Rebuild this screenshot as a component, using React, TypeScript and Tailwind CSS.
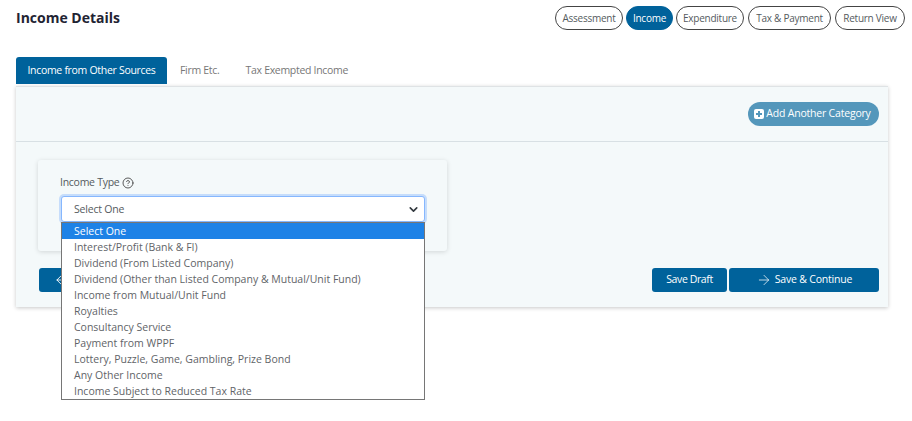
import React from 'react';
import { ArrowRight, ArrowLeft, ChevronDown, CircleHelp } from 'lucide-react';

const steps = [
  { label: 'Assessment', box: 'w-[68px]' },
  { label: 'Income', box: 'w-[47px] ml-[3px]' },
  { label: 'Expenditure', box: 'w-[68px] ml-[3px]' },
  { label: 'Tax & Payment', box: 'w-[83px] ml-[4px]' },
  { label: 'Return View', box: 'w-[70px] ml-[4px]' },
];

const incomeTypes = [
  'Select One',
  'Interest/Profit (Bank & FI)',
  'Dividend (From Listed Company)',
  'Dividend (Other than Listed Company & Mutual/Unit Fund)',
  'Income from Mutual/Unit Fund',
  'Royalties',
  'Consultancy Service',
  'Payment from WPPF',
  'Lottery, Puzzle, Game, Gambling, Prize Bond',
  'Any Other Income',
  'Income Subject to Reduced Tax Rate',
];

export default function App() {
  return (
    <div className="w-[912px] h-[421px] bg-white overflow-hidden font-['Open_Sans',sans-serif] text-[#555b60]">
      <div className="flex items-start justify-between pl-4 pr-[7px] pt-[6px] h-[57px]">
        <h1 className="text-[14px] font-bold leading-6 text-[#1f2433]">Income Details</h1>
        <div className="flex">
          {steps.map((step) => (
            <div
              key={step.label}
              className={
                step.label === 'Income'
                  ? `${step.box} h-6 flex items-center justify-center rounded-full text-[10px] tracking-[-0.25px] bg-[#00629b] border border-[#00629b] text-white`
                  : `${step.box} h-6 flex items-center justify-center rounded-full text-[10px] tracking-[-0.25px] border border-[#444] text-[#555b60]`
              }
            >
              {step.label}
            </div>
          ))}
        </div>
      </div>

      <div className="flex items-center pl-4 h-[27px] text-[10.5px] tracking-[-0.3px]">
        <div className="h-[27px] w-[151px] flex items-center justify-center rounded-t-[3px] bg-[#00629b] text-white">
          Income from Other Sources
        </div>
        <div className="ml-[13px] text-[#777] mt-[1px]">Firm Etc.</div>
        <div className="ml-[26px] text-[#777] mt-[1px]">Tax Exempted Income</div>
      </div>

      <div className="mx-4 mt-[2px] w-[872px] h-[221px] bg-[#f4f9fa] border-t border-[#dfe3e5] shadow-[0_1px_4px_rgba(0,0,0,0.22)]">
        <div className="h-[55px] flex items-center justify-end pr-[9px] border-b border-[#d8e0e4]">
          <div className="h-6 w-[131px] pr-[2px] flex items-center justify-center gap-[2px] rounded-full bg-[#5497bb] text-white text-[10.5px] tracking-[-0.2px]">
            <span className="w-[10px] h-[10px] rounded-[2px] bg-white flex items-center justify-center">
              <svg viewBox="0 0 10 10" className="w-[10px] h-[10px]">
                <path d="M5 2v6M2 5h6" stroke="#5497bb" strokeWidth="2" />
              </svg>
            </span>
            <span className="-mt-[1px]">Add Another Category</span>
          </div>
        </div>

        <div className="px-[22px] pt-[18px]">
          <div className="relative w-[409px] h-[91px] rounded-[3px] bg-[#f4f9fa] shadow-[0_1px_5px_rgba(0,0,0,0.14)] pl-[23px] pt-[15px]">
            <div className="flex items-center gap-[3px] text-[10.5px] tracking-[-0.27px] h-[16px] text-[#555b60] -ml-[1px]">
              Income Type
              <CircleHelp className="w-3 h-3 text-[#444]" strokeWidth={1.75} />
            </div>
            <div className="mt-[5px] w-[364px] h-[26px] bg-white rounded-[3px] border border-[#86b7fe] shadow-[0_0_0_2px_rgba(13,110,253,0.2)] flex items-center justify-between pl-3 pr-[4px] text-[10.5px] tracking-[-0.2px] pt-[1px]">
              Select One
              <ChevronDown className="w-[13px] h-[13px] text-[#343a40]" strokeWidth={3} />
            </div>
            <div className="absolute z-10 left-[23px] top-[62px] w-[364px] h-[178px] bg-white border border-[#767676] text-[10.5px]">
              {incomeTypes.map((item, i) => (
                <div
                  key={item}
                  className={
                    i === 0
                      ? 'h-4 leading-4 pl-3 bg-[#1e82e6] text-white'
                      : 'h-4 leading-4 pl-3 text-[#5f6468]'
                  }
                >
                  {item}
                </div>
              ))}
            </div>
          </div>

          <div className="mt-[17px] flex items-center justify-between pl-[1px] w-[841px]">
            <div className="w-[60px] h-[24px] rounded-[3px] bg-[#00629b] text-white flex items-center pl-[15px]">
              <ArrowLeft className="w-[14px] h-[14px]" strokeWidth={1.5} />
            </div>
            <div className="flex gap-[2px] text-[10.5px] text-white">
              <div className="w-[75px] h-[24px] rounded-[3px] bg-[#00629b] flex items-center justify-center tracking-[-0.4px]">Save Draft</div>
              <div className="w-[150px] h-[24px] rounded-[3px] bg-[#00629b] flex items-center justify-center gap-[3px] tracking-[-0.2px]">
                <ArrowRight className="w-4 h-4" strokeWidth={1.1} />
                Save &amp; Continue
              </div>
            </div>
          </div>
        </div>
      </div>
    </div>
  );
}
